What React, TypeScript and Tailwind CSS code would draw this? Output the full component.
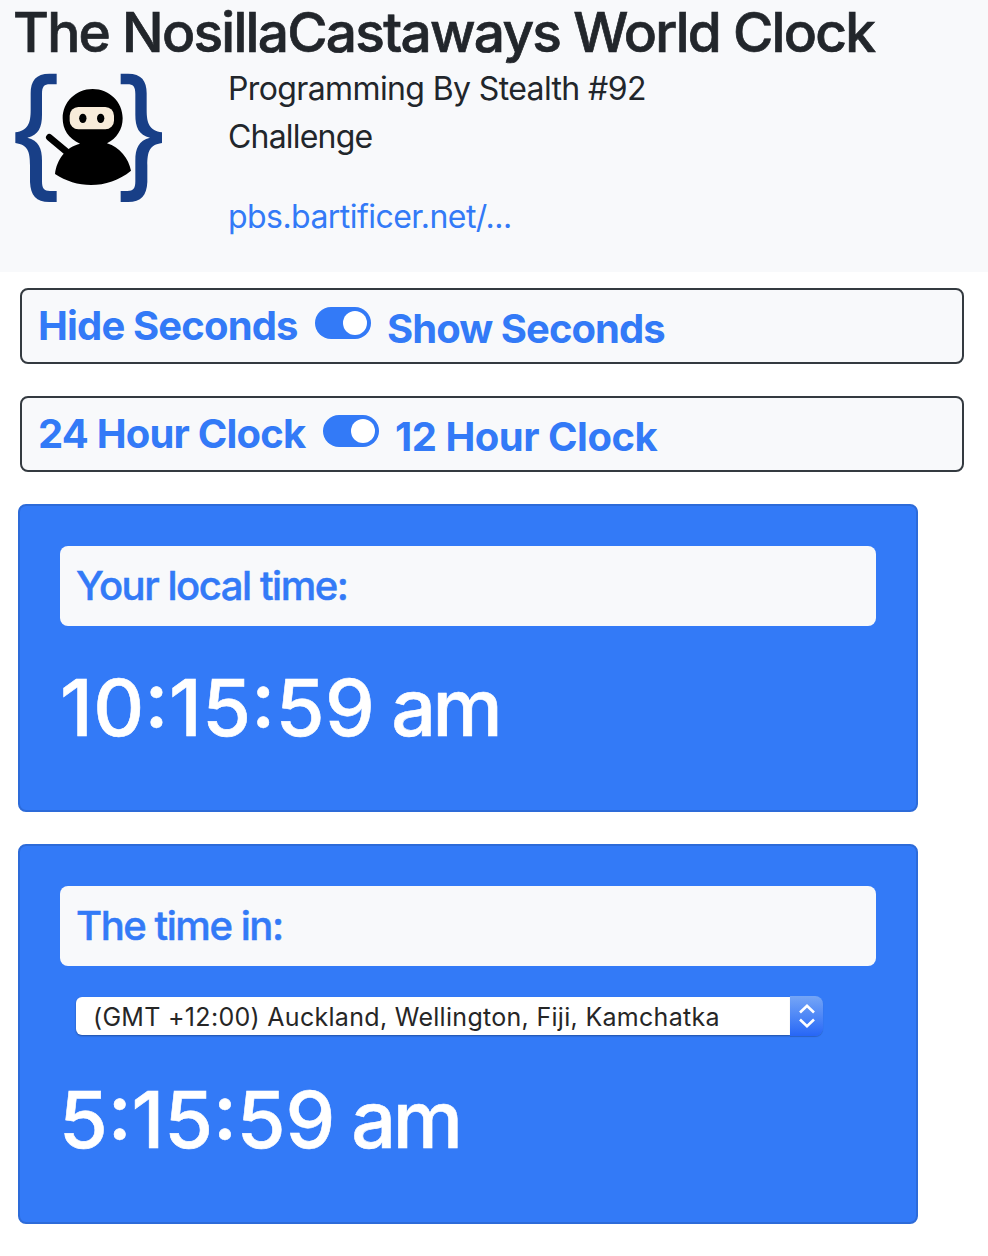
import { useState } from "react";

function NinjaLogo() {
  return (
    <svg className="block h-[150px] w-[150px] shrink-0" viewBox="42 12 450 450" aria-hidden="true">
      <g fill="#183f87">
        <path d="M170 41H148C108 41 92 62 92 100V150C92 190 84 212 46 217V249C84 254 90 276 90 316V366C92 406 108 426 148 426H170V393H150C132 393 126 386 126 364V302C126 264 116 242 82 233C116 224 126 202 126 164V102C126 80 132 73 150 73H170Z" />
        <path d="M362 41H384C424 41 440 62 440 100V150C440 190 448 212 486 217V249C448 254 442 276 442 316V366C440 406 424 426 384 426H362V393H382C400 393 406 386 406 364V302C406 264 416 242 450 233C416 224 406 202 406 164V102C406 80 400 73 382 73H362Z" />
      </g>
      <path d="M148 232L202 277" stroke="#000" strokeWidth="20" strokeLinecap="round" />
      <path d="M165 342C170 298 198 261 240 251C205 236 188 208 188 175C188 126 228 87 278 87C328 87 368 126 368 175C368 208 350 236 321 250C360 262 386 296 393 332C325 388 232 387 165 342Z" fill="#000" />
      <rect x="209" y="141" width="133" height="67" rx="26" fill="#f8ecda" />
      <ellipse cx="248.500" cy="175" rx="11" ry="14" fill="#000" />
      <ellipse cx="302" cy="175" rx="11" ry="14" fill="#000" />
    </svg>
  );
}

type ToggleProps = {
  off: string;
  on: string;
  offWidth: string;
  offText: string;
  onText: string;
};

function ToggleRow({ off, on, offWidth, offText, onText }: ToggleProps) {
  const [checked, setChecked] = useState(true);
  return (
    <div className="flex h-[76px] items-start rounded-lg border-2 border-[#343a40] bg-[#f8f9fb] pl-4 text-[40px] leading-[48px] font-bold text-[#337af7]">
      <span className={`${offWidth} ${offText} mt-[12px] shrink-0 whitespace-nowrap`}>{off}</span>
      <button
        type="button"
        role="switch"
        aria-checked={checked}
        aria-label={on}
        onClick={() => setChecked(!checked)}
        className={`mt-[17px] flex h-8 w-14 shrink-0 items-center rounded-full bg-[#337af7] px-1 ${checked ? "justify-end" : "justify-start"}`}
      >
        <span className="h-6 w-6 rounded-full bg-white" />
      </button>
      <span className={`${onText} mt-[15px] ml-4 whitespace-nowrap`}>{on}</span>
    </div>
  );
}

function Caption({ children }: { children: string }) {
  return (
    <h2 className="flex h-20 w-[816px] items-center rounded-lg bg-[#f8f9fb] pl-4 text-[40px] leading-[48px] font-medium text-[#337af7]">
      <span className="tracking-[-1.45px] whitespace-nowrap [-webkit-text-stroke:0.5px_#337af7]">{children}</span>
    </h2>
  );
}

function Clock({ digits, className }: { digits: string; className: string }) {
  return (
    <p className="flex text-[79px] leading-[96px] font-medium whitespace-nowrap text-white [-webkit-text-stroke:0.6px_#fff] [font-feature-settings:'calt'_1]">
      <span className={className}>{digits}</span>
      <span className="ml-4 tracking-[-3.5px]">am</span>
    </p>
  );
}

export default function App() {
  return (
    <div className="h-[1256px] w-[988px] overflow-hidden bg-white font-['Inter','Liberation_Sans',sans-serif] text-[#22262b]">
      <header className="h-[272px] bg-[#f8f9fb] pl-[13px]">
        <h1 className="h-16 text-[55px] leading-[64px] font-medium tracking-[-1.73px] whitespace-nowrap [-webkit-text-stroke:0.7px_#22262b]">
          The NosillaCastaways World Clock
        </h1>
        <div className="flex pl-px">
          <NinjaLogo />
          <div className="ml-16 pt-px text-[32px] leading-[48px] whitespace-nowrap">
            <p className="tracking-[-0.62px]">Programming By Stealth #92</p>
            <p className="tracking-[-0.8px]">Challenge</p>
            <p className="mt-8 tracking-[-0.55px] text-[#337af7]">pbs.bartificer.net/...</p>
          </div>
        </div>
      </header>

      <main>
        <div className="flex flex-col gap-8 pt-4 pr-6 pl-5">
          <ToggleRow off="Hide Seconds" on="Show Seconds" offWidth="w-[277px]" offText="tracking-[-0.85px]" onText="tracking-[-0.95px]" />
          <ToggleRow off="24 Hour Clock" on="12 Hour Clock" offWidth="w-[285px]" offText="tracking-[-0.8px]" onText="tracking-[-0.5px]" />
        </div>

        <section className="mt-8 ml-[18px] h-[308px] w-[900px] rounded-lg border-2 border-[#2d6bd9] bg-[#337af7] px-10 pt-10">
          <Caption>Your local time:</Caption>
          <div className="mt-[33px]">
            <Clock digits="10:15:59" className="tracking-[0.4px]" />
          </div>
        </section>

        <section className="mt-8 ml-[18px] h-[380px] w-[900px] rounded-lg border-2 border-[#2d6bd9] bg-[#337af7] px-10 pt-10">
          <Caption>The time in:</Caption>
          <button
            type="button"
            className="mt-[30px] ml-4 flex h-10 w-[747px] items-center text-left text-[#262626]"
          >
            <span className="flex h-[38px] min-w-0 flex-1 items-center rounded-l-[6px] bg-white pt-0.5 pl-[17px] shadow-[0_1px_2px_rgba(0,0,0,0.35)]">
              <span className="text-[25px] leading-[36px] tracking-[0.3px] whitespace-nowrap">
                (GMT +12:00) Auckland, Wellington, Fiji, Kamchatka
              </span>
            </span>
            <span className="flex h-10 w-[33px] items-center justify-center rounded-r-[8px] bg-linear-to-b from-[#75a5f6] to-[#2766f6] shadow-[0_1px_1px_rgba(0,0,0,0.2)]">
              <svg className="h-6 w-4" viewBox="0 0 16 24" fill="none" stroke="#fff" strokeWidth="2.600">
                <path d="M1 8.500L8 1.800L15 8.500M1 15.500L8 22.200L15 15.500" />
              </svg>
            </span>
          </button>
          <div className="mt-[35px] -ml-px">
            <Clock digits="5:15:59" className="tracking-[-0.1px]" />
          </div>
        </section>
      </main>
    </div>
  );
}
